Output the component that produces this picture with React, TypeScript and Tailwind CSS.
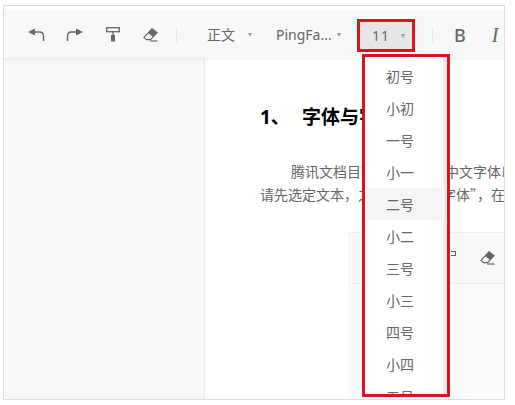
const sizes = ['初号', '小初', '一号', '小一', '二号', '小二', '三号', '小三', '四号', '小四', '五号'];

function Caret() {
  return <span className="w-0 h-0 border-x-[2.5px] border-x-transparent border-t-[4px] border-t-[#999]" />;
}

function Undo({ flip }: { flip?: boolean }) {
  return (
    <svg width="17" height="14" viewBox="0 0 17 14" className={flip ? '-scale-x-100' : ''}>
      <path d="M0 4 L7 0.5 V7.5 Z" fill="#666" />
      <path d="M6 4 H11.5 Q15.5 4 15.5 8 V13" fill="none" stroke="#666" strokeWidth="1.4" />
    </svg>
  );
}

function Roller() {
  return (
    <svg width="14" height="15" viewBox="0 0 14 15">
      <rect x="0.7" y="0.7" width="12.6" height="4" fill="none" stroke="#666" strokeWidth="1.3" />
      <path d="M7 5 V8" stroke="#666" strokeWidth="1.3" />
      <rect x="5" y="8" width="4" height="6.5" fill="#666" />
    </svg>
  );
}

function Eraser() {
  return (
    <svg width="15" height="14" viewBox="0 0 15 14">
      <path d="M9 0.8 L14 4.6 L7.6 11.6 H3.6 L1 9.4 Z" fill="#fff" stroke="#666" strokeWidth="1.2" />
      <path d="M9 0.8 L14 4.6 L10 9 L5 5 Z" fill="#666" />
      <path d="M7 13 H14.5" stroke="#666" strokeWidth="1.2" />
    </svg>
  );
}

export default function App() {
  return (
    <div className="w-[515px] h-[405px] bg-white pt-[5px] pl-[3px] overflow-hidden font-['Noto_Sans','Noto_Sans_CJK_SC',sans-serif] text-[#666]">
      <div className="relative flex flex-col w-[502px] h-[395px] border border-[#ddd] overflow-hidden" lang="zh-CN">
        {/* Top toolbar */}
        <div className="h-[48px] shrink-0 mt-[4px] pt-[1px] bg-[#f8f8f8] shadow-[0_1px_3px_rgba(0,0,0,0.08)] z-10 flex items-center pl-[24px]">
          <span className="flex w-[17px]"><Undo /></span>
          <span className="flex ml-[21px] w-[17px]"><Undo flip /></span>
          <span className="flex ml-[23px]"><Roller /></span>
          <span className="flex ml-[23px]"><Eraser /></span>
          <span className="ml-[18px] w-px h-[16px] bg-[#e6e6e6]" />
          <span className="ml-[30px] text-[14px] leading-5">正文</span>
          <span className="ml-[13px] flex"><Caret /></span>
          <span className="ml-[24px] text-[14px] leading-5 w-[59px] whitespace-nowrap">PingFa...</span>
          <span className="ml-[2px] flex"><Caret /></span>
          <div className="ml-[16px] mt-[2px] w-[58px] h-[33px] border-[3px] border-[#d8141f] bg-[#e6e6e6] flex items-center pl-[12px]">
            <span className="text-[14px] leading-5 tracking-[1px]">11</span>
            <span className="ml-[11px] flex"><Caret /></span>
          </div>
          <span className="ml-[17px] w-px h-[16px] bg-[#e6e6e6]" />
          <span className="ml-[21px] text-[18px] leading-5 font-medium">B</span>
          <span className="ml-[26px] text-[20px] leading-5 italic font-['Liberation_Serif',serif]">I</span>
        </div>

        {/* Body */}
        <div className="flex flex-1 min-h-0">
          <div className="w-[201px] shrink-0 bg-[#f8f8f8] border-r border-[#e8e8e8]" />
          <div className="flex-1 min-w-0 bg-white pl-[55px] pt-[47px] overflow-hidden">
            <h1 className="text-[19px] leading-6 font-bold text-black whitespace-nowrap">
              1、<span className="ml-[12px]">字体与字号</span>
            </h1>
            <div className="mt-[29px] text-[14px] leading-6 whitespace-nowrap font-['Noto_Sans_CJK_SC',sans-serif]">
              <p className="pl-[31px] pt-px">腾讯文档目前支持了多种中文字体以及英文字体</p>
              <p className="-mt-px">请先选定文本，之后再点击“字体”，在</p>
            </div>
          </div>
        </div>

        {/* Floating toolbar inside the document */}
        <div className="absolute left-[344px] top-[226px] w-[157px] h-[52px] bg-[#f8f8f8] border-y border-[#eee] flex items-center justify-end pr-[10px]">
          <span className="absolute left-[103px] top-[18px] w-[5px] h-[5px] border-y border-r border-[#666]" />
          <Eraser />
        </div>
        <div className="absolute left-[344px] top-[278px] w-[157px] h-[120px] bg-[#fafafa]" />

        {/* Size dropdown */}
        <div className="absolute left-[358px] top-[48px] w-[88px] h-[343px] border-[3px] border-[#d8141f] bg-white shadow-[inset_-3px_0_3px_rgba(0,0,0,0.12)] overflow-hidden z-20 pt-[3px] px-[2px]">
          {sizes.map((s) => (
            <div key={s} className={`h-[32px] pl-[19px] flex items-center text-[14px] ${s === '二号' ? 'bg-[#f4f4f4]' : ''}`}>
              {s}
            </div>
          ))}
        </div>
      </div>
    </div>
  );
}
